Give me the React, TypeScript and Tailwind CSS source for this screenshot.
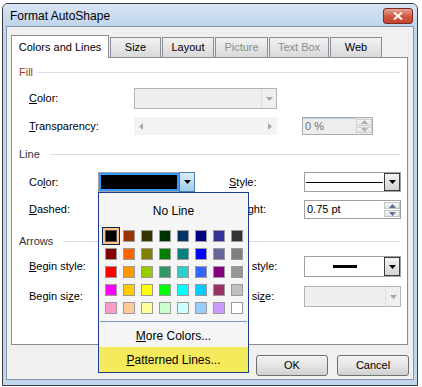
const font = "font-['Liberation_Sans',Arial,sans-serif]"

const palette = [
  ["#000000", "#993300", "#333300", "#003300", "#003366", "#000080", "#333399", "#333333"],
  ["#800000", "#ff6600", "#808000", "#008000", "#008080", "#0000ff", "#666699", "#808080"],
  ["#ff0000", "#ff9900", "#99cc00", "#339966", "#33cccc", "#3366ff", "#800080", "#969696"],
  ["#ff00ff", "#ffcc00", "#ffff00", "#00ff00", "#00ffff", "#00ccff", "#993366", "#c0c0c0"],
  ["#ff99cc", "#ffcc99", "#ffff99", "#ccffcc", "#ccffff", "#99ccff", "#cc99ff", "#ffffff"],
]

function Down({ color = "#000" }: { color?: string }) {
  return (
    <svg width="7" height="4" viewBox="0 0 7 4">
      <path d="M0 0h7L3.5 4z" fill={color} />
    </svg>
  )
}

function Up({ color = "#000" }: { color?: string }) {
  return (
    <svg width="7" height="4" viewBox="0 0 7 4">
      <path d="M0 4h7L3.5 0z" fill={color} />
    </svg>
  )
}

function Section({ title, color, gap }: { title: string; color: string; gap: string }) {
  return (
    <div className="flex items-center h-[14px] pl-[7px] pr-[7px]">
      <span className={color}>{title}</span>
      <div className={`flex-1 h-px bg-[#d5dfe5] ${gap}`} />
    </div>
  )
}

function DisabledCombo({ w }: { w: string }) {
  return (
    <div className={`${w} h-[21px] border border-[#b5b5b5] bg-[#efefef] flex`}>
      <div className="flex-1" />
      <div className="w-[15px] border-l border-[#dedede] flex items-center justify-center">
        <Down color="#a6a6a6" />
      </div>
    </div>
  )
}

function DarkButton() {
  return (
    <div className="w-[16px] h-full border border-[#3d3d3d] bg-gradient-to-b from-[#f3f3f3] to-[#d4d4d4] flex items-center justify-center">
      <Down />
    </div>
  )
}

function Spin({ color, border }: { color: string; border: string }) {
  return (
    <div className="w-[16px] flex flex-col gap-px py-px">
      <div className={`flex-1 border ${border} bg-gradient-to-b from-[#f6f6f6] to-[#e4e4e4] flex items-center justify-center`}>
        <Up color={color} />
      </div>
      <div className={`flex-1 border ${border} bg-gradient-to-b from-[#f6f6f6] to-[#e4e4e4] flex items-center justify-center`}>
        <Down color={color} />
      </div>
    </div>
  )
}

function Tab({ label, w, disabled }: { label: string; w: string; disabled?: boolean }) {
  return (
    <div
      className={`${w} h-[20px] ml-px border border-b-0 border-[#898c95] bg-gradient-to-b from-[#f2f2f2] to-[#d9d9d9] flex items-center justify-center ${
        disabled ? "text-[#8d8d8d]" : "text-black"
      }`}
    >
      {label}
    </div>
  )
}

export default function App() {
  return (
    <div className={`relative w-[422px] h-[387px] bg-white overflow-hidden text-[11px] text-black ${font}`}>
      {/* window */}
      <div className="ml-[2px] mt-[3px] w-[416px] h-[383px] border border-[#3a3a3a] rounded-t-[6px] bg-[#c2d5ec] flex flex-col">
        {/* title bar */}
        <div className="h-[22px] flex justify-between rounded-t-[5px] bg-gradient-to-b from-[#d8e5f4] to-[#c0d4ec]">
          <div className="pl-[7px] pt-[4px] text-[12px] leading-[16px]">Format AutoShape</div>
          <div className="mt-[4px] mr-[4px] w-[30px] h-[16px] rounded-[3px] border border-[#7b2a20] bg-gradient-to-b from-[#e8a596] via-[#cf5a43] to-[#c8442c] flex items-center justify-center">
            <svg width="10" height="8" viewBox="0 0 10 8">
              <path d="M1 0.5L9 7.5M9 0.5L1 7.5" stroke="#fff" strokeWidth="2" />
            </svg>
          </div>
        </div>

        {/* client area */}
        <div className="ml-[3px] w-[408px] h-[354px] border border-[#8796a8] bg-[#f0f0f0] flex flex-col">
          {/* tabs */}
          <div className="ml-[4px] mt-[8px] h-[22px] flex items-end">
            <div className="relative z-10 -mb-px w-[98px] h-[23px] border border-b-0 border-[#898c95] bg-white flex items-center justify-center">
              Colors and Lines
            </div>
            <Tab label="Size" w="w-[51px]" />
            <Tab label="Layout" w="w-[52px]" />
            <Tab label="Picture" w="w-[53px]" disabled />
            <Tab label="Text Box" w="w-[60px]" disabled />
            <Tab label="Web" w="w-[52px]" />
          </div>

          {/* panel */}
          <div className="ml-[4px] w-[397px] h-[288px] border border-[#898c95] bg-white flex flex-col">
            <div className="mt-[7px]">
              <Section title="Fill" color="text-[#9b3b25]" gap="ml-[4px]" />
            </div>

            <div className="mt-[9px] h-[21px] flex items-center pl-[17px]">
              <div className="w-[105px]">
                <span className="underline">C</span>olor:
              </div>
              <DisabledCombo w="w-[143px]" />
            </div>

            <div className="mt-[8px] h-[18px] flex items-center pl-[17px]">
              <div className="w-[105px]">
                <span className="underline">T</span>ransparency:
              </div>
              <div className="w-[143px] h-[18px] bg-[#f3f3f3] flex items-center justify-between px-[5px]">
                <svg width="4" height="7" viewBox="0 0 4 7">
                  <path d="M4 0v7L0 3.5z" fill="#a9a9a9" />
                </svg>
                <svg width="4" height="7" viewBox="0 0 4 7">
                  <path d="M0 0v7L4 3.5z" fill="#a9a9a9" />
                </svg>
              </div>
              <div className="ml-[25px] w-[71px] h-[18px] border border-[#acacac] bg-[#ededed] flex">
                <div className="flex-1 border-t border-[#b9d1ea] pl-[2px] flex items-center text-[#6d6d6d]">0 %</div>
                <Spin color="#b0b0b0" border="border-[#d0d0d0]" />
              </div>
            </div>

            <div className="mt-[12px]">
              <Section title="Line" color="text-[#333]" gap="ml-[10px]" />
            </div>

            <div className="mt-[11px] h-[20px] flex items-center pl-[17px]">
              <div className="w-[69px]">
                Co<span className="underline">l</span>or:
              </div>
              <div className="w-[97px] h-[20px] border border-[#a0a0a0] flex">
                <div className="flex-1 mt-0 border-2 border-[#3399ff] bg-black" />
                <div className="w-[16px] -mt-px -mb-px -mr-px border border-[#4f7ea6] bg-gradient-to-b from-[#dcedf9] to-[#9fcbea] flex items-center justify-center">
                  <Down />
                </div>
              </div>
              <div className="ml-[34px] w-[75px]">
                <span className="underline">S</span>tyle:
              </div>
              <div className="w-[97px] h-[20px] border border-[#a0a0a0] bg-white flex items-center">
                <div className="flex-1 h-px bg-black mx-[1px]" />
                <DarkButton />
              </div>
            </div>

            <div className="mt-[8px] h-[19px] flex items-center pl-[17px]">
              <div className="w-[69px]">
                <span className="underline">D</span>ashed:
              </div>
              <div className="w-[97px]" />
              <div className="ml-[34px] w-[75px]">
                <span className="underline">W</span>eight:
              </div>
              <div className="w-[97px] h-[19px] border border-[#a0a0a0] bg-white flex">
                <div className="flex-1 pl-[2px] flex items-center">0.75 pt</div>
                <Spin color="#5b6d9b" border="border-[#c4c4c4]" />
              </div>
            </div>

            <div className="mt-[15px]">
              <Section title="Arrows" color="text-[#333]" gap="ml-[10px]" />
            </div>

            <div className="mt-[8px] h-[21px] flex items-center pl-[17px]">
              <div className="w-[69px]">
                <span className="underline">B</span>egin style:
              </div>
              <div className="w-[97px]" />
              <div className="ml-[34px] w-[75px]">
                <span className="underline">E</span>nd style:
              </div>
              <div className="w-[97px] h-[21px] border border-[#a0a0a0] bg-white flex items-center">
                <div className="flex-1 flex justify-center">
                  <div className="w-[24px] h-[3px] bg-black" />
                </div>
                <DarkButton />
              </div>
            </div>

            <div className="mt-[9px] h-[21px] flex items-center pl-[17px]">
              <div className="w-[69px]">
                Begin si<span className="underline">z</span>e:
              </div>
              <div className="w-[97px]" />
              <div className="ml-[34px] w-[75px]">
                End si<span className="underline">z</span>e:
              </div>
              <DisabledCombo w="w-[97px]" />
            </div>
          </div>

          {/* buttons */}
          <div className="mt-[10px] flex">
            <div className="ml-[249px] w-[72px] h-[21px] rounded-[3px] border border-[#707070] bg-gradient-to-b from-[#f2f2f2] via-[#e6e6e6] to-[#d0d0d0] flex items-center justify-center">
              OK
            </div>
            <div className="ml-[9px] w-[72px] h-[21px] rounded-[3px] border border-[#707070] bg-gradient-to-b from-[#f2f2f2] via-[#e6e6e6] to-[#d0d0d0] flex items-center justify-center">
              Cancel
            </div>
          </div>
        </div>
      </div>

      {/* colour popup */}
      <div className="absolute left-[98px] top-[192px] w-[151px] h-[181px] border border-[#1c3b94] bg-[#f5f5f5] flex flex-col">
        <div className="h-[34px] flex items-center justify-center pt-[2px] text-[12px]">No Line</div>
        <div className="ml-[3px] flex flex-col">
          {palette.map((row, r) => (
            <div key={r} className="flex">
              {row.map((c, i) =>
                r === 0 && i === 0 ? (
                  <div key={i} className="w-[18px] h-[18px] border border-[#0a246a] bg-[#ffc580] flex items-center justify-center">
                    <div className="w-[12px] h-[12px] border border-[#555]" style={{ background: c }} />
                  </div>
                ) : (
                  <div key={i} className="w-[18px] h-[18px] flex items-center justify-center">
                    <div className="w-[12px] h-[12px] border border-[#9a9a9a]" style={{ background: c }} />
                  </div>
                )
              )}
            </div>
          ))}
        </div>
        <div className="mt-[4px] mx-[1px] h-px bg-[#7b96cf]" />
        <div className="h-[25px] pt-[2px] flex items-center justify-center text-[12px]">
          <span>
            <span className="underline">M</span>ore Colors...
          </span>
        </div>
        <div className="h-[25px] bg-[#f5ea5b] flex items-center justify-center text-[12px]">
          <span>
            <span className="underline">P</span>atterned Lines...
          </span>
        </div>
      </div>
    </div>
  )
}
